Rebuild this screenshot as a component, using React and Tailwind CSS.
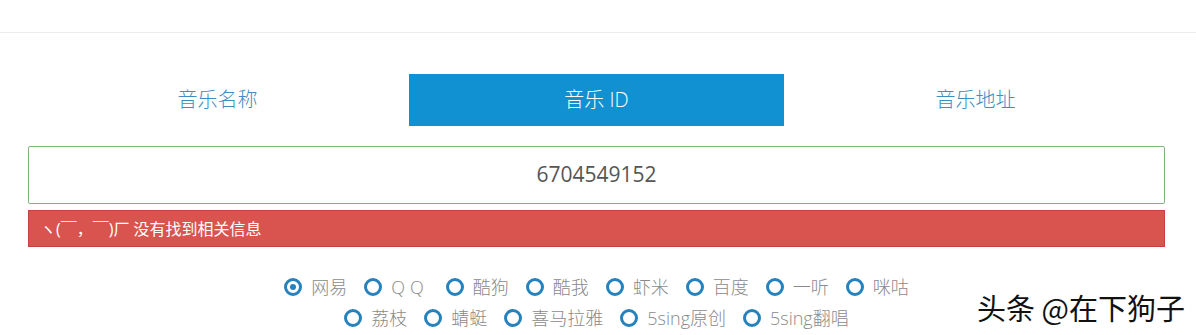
import { useState } from 'react'

const tabs = ['音乐名称', '音乐 ID', '音乐地址']

const rowOne = ['网易', 'QQ', '酷狗', '酷我', '虾米', '百度', '一听', '咪咕']
const rowTwo = ['荔枝', '蜻蜓', '喜马拉雅', '5sing原创', '5sing翻唱']

const Radio = ({ label, checked, onPick }) => (
  <label className="flex items-center gap-[9px] cursor-pointer" onClick={onPick}>
    <span className="w-[18px] h-[18px] rounded-full border-[3px] border-[#2582bd] flex items-center justify-center">
      {checked && <span className="w-[6px] h-[6px] rounded-full bg-[#2582bd]" />}
    </span>
    <span className={label === 'QQ' ? 'tracking-[5px]' : ''}>{label}</span>
  </label>
)

export default function App() {
  const [tab, setTab] = useState(1)
  const [source, setSource] = useState('网易')

  return (
    <div className="relative w-[1196px] h-[335px] bg-white overflow-hidden font-['Open_Sans','Noto_Sans_CJK_SC',sans-serif]">
      <div className="h-[33px] border-b border-[#ececec]" />

      <div className="pl-[28px] pr-[31px] pt-[41px]">
        {/* tabs */}
        <div className="grid grid-cols-3">
          {tabs.map((t, i) => (
            <div key={t} className="px-[2px]">
              <button
                onClick={() => setTab(i)}
                className={
                  'w-full h-[52px] text-[20px] font-light ' +
                  (tab === i ? 'bg-[#1190d2] text-white' : 'text-[#3b8dc2]')
                }
              >
                {t}
              </button>
            </div>
          ))}
        </div>

        {/* input */}
        <div className="mt-[20px] h-[58px] border border-[#7fb47f] rounded-[2px] flex items-center justify-center text-[21px] text-[#555]">
          6704549152
        </div>

        {/* alert */}
        <div className="mt-[6px] h-[37px] bg-[#d9534f] border border-[#c9403c] flex items-center px-[11px] text-[16px] text-white">
          ヽ(￣，￣)厂 没有找到相关信息
        </div>

        {/* sources */}
        <div className="mt-[29px] flex flex-col items-center gap-[9px] text-[18px] text-[#8a8a8a] leading-[22px] font-light">
          <div className="flex items-center gap-[17px]">
            {rowOne.map((s) => (
              <Radio key={s} label={s} checked={source === s} onPick={() => setSource(s)} />
            ))}
          </div>
          <div className="flex items-center gap-[17px]">
            {rowTwo.map((s) => (
              <Radio key={s} label={s} checked={source === s} onPick={() => setSource(s)} />
            ))}
          </div>
        </div>
      </div>

      {/* watermark */}
      <div className="absolute right-[11px] bottom-[6px] text-[29px] text-[#111] font-['Noto_Sans_CJK_SC',sans-serif] [text-shadow:1px_1px_0_#fff,-1px_-1px_0_#fff]">
        头条 @在下狗子
      </div>
    </div>
  )
}
